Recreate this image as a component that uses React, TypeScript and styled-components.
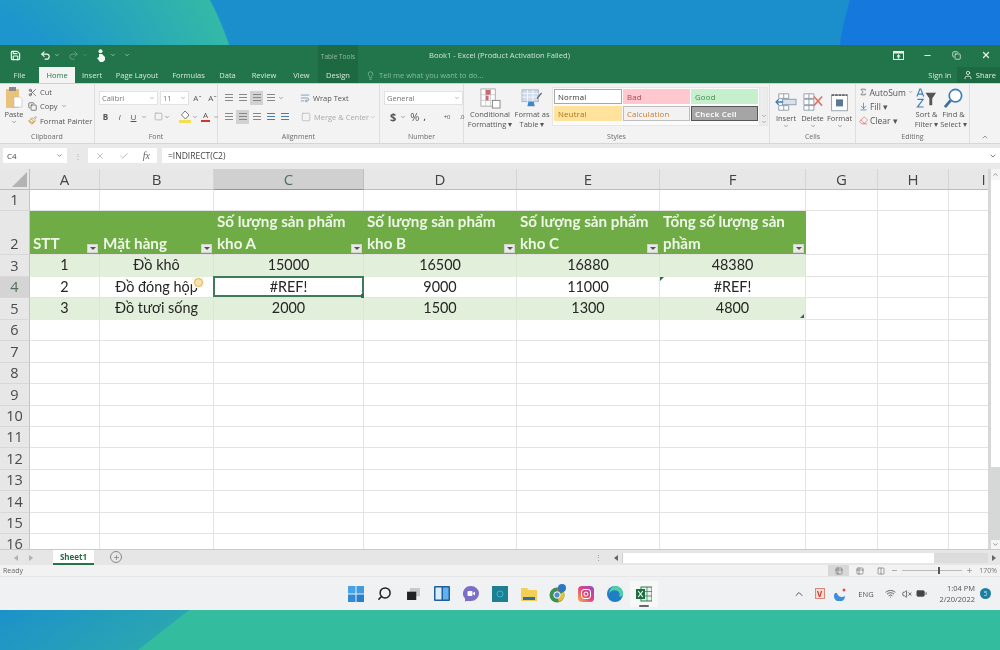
import * as React from "react";
import styled, { createGlobalStyle } from "styled-components";
import {
  Save,
  Undo2,
  Redo2,
  Lightbulb,
  User,
  Scissors,
  Copy,
  Paintbrush,
  ChevronDown,
  ChevronUp,
  X,
  Check,
  Minus,
  Plus,
  Search,
  Wifi,
  VolumeX,
  BatteryLow,
  Sigma,
  Eraser,
  ArrowDownToLine,
  Square,
  Table2,
  WrapText,
  Columns2,
} from "lucide-react";

const Global = createGlobalStyle`
  html, body { margin: 0; padding: 0; background: #1b8fca; }
  * { box-sizing: border-box; }
  body { width: 1000px; height: 650px; overflow: hidden; font-family: "Open Sans", sans-serif; }
`;

const Page = styled.div`
  width: 1000px;
  height: 650px;
  display: flex;
  flex-direction: column;
  filter: blur(0.35px);
`;

const TopWallpaper = styled.div`
  height: 45px;
  background:
    radial-gradient(circle 300px at 1136px 88px, #1478dc 99.5%, transparent 100%),
    radial-gradient(circle 300px at -55px 139px, #1c96cc 45%, #33b9a6 99.5%, transparent 100%),
    #1a8fcc;
`;

const BottomWallpaper = styled.div`
  height: 40px;
  background: linear-gradient(142deg, #1c92c9 0, #2aa5b2 116px, #34bc9f 117px, #34bc9f 100%);
`;

const Window = styled.div`
  height: 565px;
  display: flex;
  flex-direction: column;
  background: #f1f1f1;
  overflow: hidden;
`;

const TitleBar = styled.div`
  height: 22px;
  flex: none;
  background: #22744a;
  display: grid;
  grid-template-columns: 318px 40px 1fr auto;
  align-items: stretch;
  color: #e3f0e8;
`;

const QuickAccess = styled.div`
  display: flex;
  align-items: center;
  padding: 0 0 2px 10px;
  gap: 4px;
`;

const QuickIcon = styled.span<{ $w?: number; $dim?: boolean }>`
  width: ${(p) => p.$w ?? 24}px;
  display: flex;
  align-items: center;
  gap: 3px;
  opacity: ${(p) => (p.$dim ? 0.35 : 1)};
  color: #f2f8f4;
`;

const ContextTitle = styled.div`
  background: #1d6a42;
  font-size: 6.5px;
  display: flex;
  align-items: center;
  justify-content: center;
  color: #9ab8a6;
`;

const DocTitle = styled.div`
  font-size: 7.6px;
  display: flex;
  align-items: center;
  padding: 0 0 2px 71px;
  color: #cfe3d7;
`;

const WindowControls = styled.div`
  display: flex;
  align-items: center;
  padding-bottom: 2px;
`;

const WindowButton = styled.span`
  width: 29px;
  display: flex;
  justify-content: center;
  color: #e9f3ed;
`;

const TabRow = styled.div`
  height: 17px;
  flex: none;
  background: #22744a;
  display: flex;
  align-items: stretch;
  font-size: 7.5px;
  color: #d5e8dc;
  border-bottom: 1px solid #b9dcc6;
`;

const Tab = styled.div<{ $w: number; $active?: boolean; $context?: boolean }>`
  width: ${(p) => p.$w}px;
  display: flex;
  align-items: center;
  justify-content: center;
  background: ${(p) => (p.$active ? "#f3f3f3" : p.$context ? "#1d6a42" : "transparent")};
  color: ${(p) => (p.$active ? "#22744a" : "inherit")};
  white-space: nowrap;
`;

const TellMe = styled.div`
  margin-left: 8px;
  flex: 1;
  display: flex;
  align-items: center;
  gap: 4px;
  color: #87bd9f;
`;

const ShareBox = styled.div`
  display: flex;
  align-items: center;
  gap: 3px;
  padding: 0 4px 0 6px;
  background: #1d6a42;
  color: #e3f0e8;
  height: 100%;
`;

const Ribbon = styled.div`
  height: 60px;
  flex: none;
  display: flex;
  background: #f3f3f3;
  border-bottom: 1px solid #d6d6d6;
  color: #555;
  font-size: 7.5px;
`;

const Group = styled.div<{ $w: number }>`
  width: ${(p) => p.$w}px;
  flex: none;
  display: flex;
  flex-direction: column;
  border-right: 1px solid #dedede;
`;

const GroupBody = styled.div<{ $top?: number }>`
  flex: 1;
  display: flex;
  min-height: 0;
  padding-top: ${(p) => p.$top ?? 3}px;
`;

const GroupLabel = styled.div`
  height: 11px;
  font-size: 7px;
  line-height: 10px;
  text-align: center;
  color: #6b6b6b;
`;

const Stack = styled.div<{ $w?: number; $pad?: number; $size?: number }>`
  display: flex;
  flex-direction: column;
  width: ${(p) => (p.$w ? `${p.$w}px` : "auto")};
  padding-left: ${(p) => p.$pad ?? 0}px;
  font-size: ${(p) => p.$size ?? 7.5}px;
`;

const Line = styled.div<{ $gap?: number; $h?: number }>`
  display: flex;
  align-items: center;
  gap: ${(p) => p.$gap ?? 3}px;
  height: ${(p) => p.$h ?? 15}px;
  white-space: nowrap;
`;

const Spacer = styled.span<{ $w: number }>`
  width: ${(p) => p.$w}px;
  flex: none;
`;

const Muted = styled.span`
  color: #aaa;
`;

const NumberMark = styled.span<{ $size: number; $bold?: boolean }>`
  font-size: ${(p) => p.$size}px;
  font-weight: ${(p) => (p.$bold ? 700 : 400)};
`;

const BigButton = styled.div<{ $w: number; $mt?: number }>`
  width: ${(p) => p.$w}px;
  margin-top: ${(p) => p.$mt ?? 0}px;
  display: flex;
  flex-direction: column;
  align-items: center;
  text-align: center;
  line-height: 10px;
  font-size: 7.5px;
  white-space: nowrap;
`;

const BigIcon = styled.div`
  height: 22px;
  display: flex;
  align-items: center;
  justify-content: center;
`;

const Field = styled.div<{ $w: number }>`
  width: ${(p) => p.$w}px;
  height: 14px;
  background: #fff;
  border: 1px solid #e2e2e2;
  display: flex;
  align-items: center;
  justify-content: space-between;
  padding: 0 2px;
  color: #777;
  font-size: 7.5px;
`;

const Toggle = styled.span<{ $on?: boolean; $b?: boolean }>`
  width: 13px;
  height: 14px;
  display: flex;
  flex-direction: column;
  align-items: center;
  justify-content: center;
  gap: 1px;
  background: ${(p) => (p.$on ? "#d2d2d2" : "transparent")};
  font-weight: ${(p) => (p.$b ? 700 : 400)};
  font-size: 8px;
  line-height: 8px;
`;

const TextBars = styled.i<{ $color?: string }>`
  display: block;
  width: 8px;
  height: 7px;
  background: repeating-linear-gradient(
    180deg,
    ${(p) => p.$color ?? "#888"} 0 1px,
    transparent 1px 3px
  );
`;

const ColorBar = styled.i`
  display: block;
  width: 9px;
  height: 2px;
  background: #d8342c;
`;

const Gallery = styled.div`
  display: grid;
  grid-template-columns: 68px 67px 67px;
  grid-template-rows: 15px 15px;
  gap: 2px 1px;
  padding: 1px 1px 0;
  height: 39px;
  background: #fbfbfb;
  border: 1px solid #e6e6e6;
  border-right: 0;
  margin-left: 1px;
`;

const StyleCell = styled.div<{ $bg: string; $fg: string; $line?: string; $bold?: boolean }>`
  background: ${(p) => p.$bg};
  color: ${(p) => p.$fg};
  border: 1px solid ${(p) => p.$line ?? p.$bg};
  font-size: 7.8px;
  font-weight: ${(p) => (p.$bold ? 700 : 400)};
  display: flex;
  align-items: center;
  padding-left: 3px;
  letter-spacing: 0.2px;
`;

const GalleryScroll = styled.div`
  width: 9px;
  height: 39px;
  background: #ececec;
  border: 1px solid #e6e6e6;
  display: flex;
  flex-direction: column;
  align-items: center;
  justify-content: flex-end;
  color: #777;
`;

const Collapse = styled.div`
  flex: 1;
  display: flex;
  align-items: flex-end;
  justify-content: center;
  padding-bottom: 2px;
  color: #666;
`;

const FormulaGap = styled.div`
  height: 4px;
  flex: none;
  background: #e9e9e9;
`;

const FormulaBar = styled.div`
  height: 21px;
  flex: none;
  display: flex;
  gap: 3px;
  padding: 0 0 6px 3px;
  background: #e9e9e9;
  font-size: 8px;
  color: #444;
`;

const NameBox = styled.div`
  width: 64px;
  background: #fff;
  display: flex;
  align-items: center;
  justify-content: space-between;
  padding: 0 4px;
`;

const FormulaGrip = styled.div`
  width: 15px;
  display: flex;
  align-items: center;
  justify-content: center;
  color: #aaa;
`;

const FormulaButtons = styled.div`
  width: 69px;
  margin-right: 2px;
  background: #fff;
  display: flex;
  align-items: center;
  justify-content: space-around;
  color: #b5b5b5;
`;

const FxMark = styled.span`
  font-family: "Liberation Serif", serif;
  font-style: italic;
  color: #666;
  font-size: 10px;
`;

const FormulaInput = styled.div`
  flex: 1;
  background: #fff;
  display: flex;
  align-items: center;
  justify-content: space-between;
  padding: 0 3px 0 6px;
  font-size: 8.5px;
`;

const SheetArea = styled.div`
  height: 380px;
  flex: none;
  display: flex;
  background: #fff;
  overflow: hidden;
`;

const Grid = styled.div`
  width: 988px;
  flex: none;
  overflow: hidden;
  display: grid;
  grid-template-columns: 30px 70px 114px 150px 153px 143px 146px 72px 71px 70px;
  grid-template-rows: 21px 21px 44px 22px 21px 22px repeat(11, 21.4px);
  font-family: Lato, "Open Sans", sans-serif;
  font-size: 14.4px;
  color: #262626;
`;

const ColHead = styled.div<{ $sel?: boolean }>`
  background: ${(p) => (p.$sel ? "#d0d0d0" : "#e7e7e7")};
  border-right: 1px solid ${(p) => (p.$sel ? "#c0c0c0" : "#d4d4d4")};
  border-bottom: 1px solid ${(p) => (p.$sel ? "#8a9a8f" : "#bdbdbd")};
  display: flex;
  align-items: center;
  justify-content: center;
  color: ${(p) => (p.$sel ? "#4f6f5d" : "#444")};
  font-size: 15px;
  font-family: "Open Sans", sans-serif;
`;

const Corner = styled.div`
  background: #e7e7e7;
  border-right: 1px solid #bdbdbd;
  border-bottom: 1px solid #bdbdbd;
  display: flex;
  align-items: flex-end;
  justify-content: flex-end;
  padding: 0 2px 2px 0;
`;

const CornerMark = styled.i`
  width: 0;
  height: 0;
  border-left: 15px solid transparent;
  border-bottom: 15px solid #b3b3b3;
`;

const RowHead = styled.div<{ $sel?: boolean }>`
  background: ${(p) => (p.$sel ? "#d4d4d4" : "#e7e7e7")};
  border-right: 1px solid #c4c4c4;
  border-bottom: 1px solid #d8d8d8;
  display: flex;
  align-items: flex-end;
  justify-content: center;
  color: ${(p) => (p.$sel ? "#4f6f5d" : "#4a4a4a")};
  font-family: "Open Sans", sans-serif;
  font-size: 14.5px;
  line-height: 20px;
`;

const Cell = styled.div<{ $tone?: "head" | "band" | "plain" }>`
  position: relative;
  display: flex;
  align-items: center;
  justify-content: center;
  padding-bottom: 2px;
  white-space: nowrap;
  border-right: 1px solid ${(p) => (p.$tone === "head" ? "#70ad47" : p.$tone === "band" ? "#d9e8cf" : "#e3e3e3")};
  border-bottom: 1px solid ${(p) => (p.$tone === "band" ? "#e2efda" : "#e3e3e3")};
  background: ${(p) => (p.$tone === "head" ? "#6fac46" : p.$tone === "band" ? "#e2efda" : "#fff")};
`;

const HeadCell = styled(Cell)`
  align-items: flex-end;
  justify-content: flex-start;
  white-space: normal;
  color: #eef6e8;
  font-weight: 700;
  font-size: 15.2px;
  padding: 0 0 0 3px;
  line-height: 21.5px;
`;

const HeadText = styled.div`
  width: 142px;
`;

const FilterButton = styled.span`
  position: absolute;
  right: 1px;
  bottom: 1px;
  width: 11px;
  height: 9px;
  background: #e9e9e9;
  border: 1px solid #cfd8c8;
  display: flex;
  align-items: center;
  justify-content: center;
  &::after {
    content: "";
    border-left: 3px solid transparent;
    border-right: 3px solid transparent;
    border-top: 3px solid #555;
  }
`;

const Selection = styled.span`
  position: absolute;
  inset: -1px -1px 0 -1px;
  border: 2px solid #3f7a5a;
  &::after {
    content: "";
    position: absolute;
    right: -3px;
    bottom: -3px;
    width: 4px;
    height: 4px;
    background: #2b6f4b;
  }
`;

const SmartTag = styled.span`
  position: absolute;
  right: 9px;
  top: 0;
  width: 12px;
  height: 11px;
  background: #fbf6ec;
  display: flex;
  align-items: center;
  justify-content: center;
  &::after {
    content: "";
    width: 7px;
    height: 7px;
    border-radius: 50%;
    background: #f8e2ac;
    border: 1px solid #e0b257;
  }
`;

const ErrorMark = styled.span`
  position: absolute;
  left: 0;
  top: 0;
  border-top: 4px solid #2b6f4b;
  border-right: 4px solid transparent;
`;

const ResizeMark = styled.span`
  position: absolute;
  right: 1px;
  bottom: 1px;
  border-bottom: 4px solid #3c5a7c;
  border-left: 4px solid transparent;
`;

const VScroll = styled.div`
  width: 12px;
  background: #d6d8d8;
  padding-left: 3px;
  display: flex;
  flex-direction: column;
`;

const ScrollButton = styled.div<{ $end?: boolean }>`
  height: ${(p) => (p.$end ? 9 : 11)}px;
  margin-top: ${(p) => (p.$end ? "auto" : "0")};
  background: #f5f5f5;
  display: flex;
  align-items: center;
  justify-content: center;
  color: #555;
`;

const ScrollThumb = styled.div`
  height: 287px;
  background: #fff;
`;

const SheetTabs = styled.div`
  height: 16px;
  flex: none;
  display: flex;
  align-items: stretch;
  background: #e6e6e6;
  border-top: 1px solid #c9c9c9;
  font-size: 8px;
  color: #888;
`;

const TabNav = styled.div`
  width: 53px;
  display: flex;
  align-items: center;
  gap: 11px;
  padding-left: 14px;
`;

const SheetTab = styled.div`
  width: 41px;
  background: #fff;
  border-bottom: 2px solid #22744a;
  color: #2a6a48;
  font-weight: 700;
  display: flex;
  align-items: center;
  justify-content: center;
`;

const AddSheet = styled.div`
  margin-left: 16px;
  width: 12px;
  height: 12px;
  margin-top: 1px;
  border: 1px solid #888;
  border-radius: 50%;
  display: flex;
  align-items: center;
  justify-content: center;
  color: #666;
`;

const SplitDots = styled.div`
  margin-left: auto;
  display: flex;
  align-items: center;
  padding-right: 7px;
  letter-spacing: 1px;
  font-size: 7px;
`;

const HScroll = styled.div`
  width: 390px;
  display: flex;
  align-items: stretch;
`;

const HTrack = styled.div`
  flex: 1;
  margin: 3px 0 2px;
  background: linear-gradient(90deg, #fff 311px, #dcdcdc 311px);
  border-left: 1px solid #cfcfcf;
`;

const HButton = styled.div`
  width: 12px;
  display: flex;
  align-items: center;
  justify-content: center;
`;

const Arrow = styled.i<{ $left?: boolean; $tint?: string }>`
  border-top: 3px solid transparent;
  border-bottom: 3px solid transparent;
  ${(p) => (p.$left ? "border-right" : "border-left")}: 4px solid ${(p) => p.$tint ?? "#666"};
`;

const StatusBar = styled.div`
  height: 12px;
  flex: none;
  background: #f2f2f2;
  border-bottom: 1px solid #e6e6e6;
  display: flex;
  align-items: center;
  padding: 0 3px;
  font-size: 7px;
  color: #666;
`;

const ViewButtons = styled.div`
  margin-left: auto;
  display: flex;
  align-items: center;
  height: 100%;
  color: #777;
`;

const ViewButton = styled.span<{ $on?: boolean }>`
  width: 21px;
  height: 100%;
  display: flex;
  align-items: center;
  justify-content: center;
  background: ${(p) => (p.$on ? "#d8d8d8" : "transparent")};
`;

const ZoomSlider = styled.div`
  width: 60px;
  margin: 0 4px;
  height: 1px;
  background: #bbb;
  position: relative;
`;

const ZoomThumb = styled.span`
  position: absolute;
  left: 36px;
  top: -3px;
  width: 2px;
  height: 7px;
  background: #555;
`;

const ZoomValue = styled.span`
  width: 24px;
  text-align: right;
`;

const Taskbar = styled.div`
  height: 33px;
  flex: none;
  background: #f0f1f3;
  display: grid;
  grid-template-columns: 1fr auto 1fr;
  align-items: center;
`;

const TaskIcons = styled.div`
  grid-column: 2;
  display: flex;
  align-items: center;
`;

const TaskIcon = styled.div<{ $active?: boolean }>`
  position: relative;
  width: 28.8px;
  height: 26px;
  display: flex;
  align-items: center;
  justify-content: center;
  background: ${(p) => (p.$active ? "#f8f8f8" : "transparent")};
  &::after {
    content: "";
    display: ${(p) => (p.$active ? "block" : "none")};
    position: absolute;
    bottom: 0;
    width: 10px;
    height: 2px;
    border-radius: 1px;
    background: #666;
  }
`;

const MirroredSearch = styled(Search)`
  transform: scaleX(-1);
`;

const Tray = styled.div`
  grid-column: 3;
  display: flex;
  align-items: center;
  justify-content: flex-end;
  color: #555;
  font-size: 7.5px;
  padding-right: 9px;
`;

const TraySlot = styled.span<{ $w: number }>`
  width: ${(p) => p.$w}px;
  display: flex;
  align-items: center;
  justify-content: center;
`;

const Clock = styled.div`
  width: 46px;
  text-align: right;
  line-height: 11px;
  margin-right: 5px;
`;

const UserBadge = styled.span`
  width: 11px;
  height: 11px;
  border-radius: 50%;
  background: #1a7fa0;
  color: #cfeaf2;
  font-size: 6.5px;
  display: flex;
  align-items: center;
  justify-content: center;
`;

const VShield = styled.span`
  width: 10px;
  height: 11px;
  background: #f7dcd6;
  border: 1px solid #d98a7c;
  color: #c0392b;
  font-size: 8px;
  font-weight: 700;
  display: flex;
  align-items: center;
  justify-content: center;
`;

const PasteIcon = () => (
  <svg width="18" height="22" viewBox="0 0 18 22">
    <rect x="1" y="2" width="13" height="19" rx="1" fill="#e9c27d" />
    <rect x="4" y="0" width="7" height="4" fill="#8a8a8a" />
    <path d="M9 10h6l2 2v8H9z" fill="#fff" stroke="#bbb" strokeWidth=".6" />
  </svg>
);

const TouchIcon = () => (
  <svg width="11" height="13" viewBox="0 0 11 13">
    <circle cx="4.5" cy="2.2" r="2" fill="#f2f8f4" />
    <path d="M3 5h3l3 3v3l-2 2H4L1 9l2-1z" fill="#f2f8f4" />
  </svg>
);

const RibbonDisplayIcon = () => (
  <svg width="11" height="9" viewBox="0 0 11 9">
    <rect x=".5" y=".5" width="10" height="8" fill="none" stroke="#e9f3ed" />
    <rect x=".5" y=".5" width="10" height="2" fill="#e9f3ed" />
    <path d="M5.5 3l2 2.5h-4z" fill="#e9f3ed" />
    <rect x="4.7" y="5" width="1.6" height="2.5" fill="#e9f3ed" />
  </svg>
);

const FillIcon = () => (
  <svg width="12" height="13" viewBox="0 0 12 13">
    <path d="M6 1l4 4-3.5 4L2.5 5z" fill="#fff" stroke="#777" />
    <rect x="0" y="10" width="12" height="3" fill="#f4e04d" />
  </svg>
);

const CondFormatIcon = () => (
  <svg width="21" height="21" viewBox="0 0 22 22">
    <rect x="1" y="1" width="15" height="18" fill="#fff" stroke="#aaa" />
    <path d="M1 7h15M1 13h15M6 1v18M11 1v18" stroke="#bbb" strokeWidth=".7" />
    <rect x="6" y="2" width="5" height="5" fill="#c76b74" />
    <rect x="6" y="8" width="3" height="5" fill="#c76b74" />
    <rect x="13" y="13" width="8" height="8" fill="#fff" stroke="#888" />
  </svg>
);

const FormatTableIcon = () => (
  <svg width="22" height="20" viewBox="0 0 24 22">
    <rect x="1" y="2" width="18" height="13" fill="#cfdcec" stroke="#a9b4c0" />
    <path d="M1 6h18M1 10h18M7 2v13M13 2v13" stroke="#fff" strokeWidth=".8" />
    <path d="M17 11l5-6 1 1-5 6z" fill="#666" />
    <path d="M8 15h6l1 5H7z" fill="#3f87c6" />
  </svg>
);

const InsertCellsIcon = () => (
  <svg width="22" height="20" viewBox="0 0 24 22">
    <path d="M4 2h11v5H4zM4 15h11v5H4zM9.5 2v5M9.5 15v5" fill="#fff" stroke="#8a9aa8" />
    <rect x="8" y="8" width="15" height="6" fill="#d8e2ec" stroke="#8a9aa8" />
    <path d="M1 11h8M4 8l-3 3 3 3" fill="none" stroke="#3f7fb8" strokeWidth="1.4" />
  </svg>
);

const DeleteCellsIcon = () => (
  <svg width="22" height="20" viewBox="0 0 24 22">
    <path d="M2 2h11v5H2zM2 15h11v5H2zM2 8h11v6H2zM7.5 2v18" fill="#fff" stroke="#8a9aa8" />
    <path d="M13 5l9 10M22 5l-9 10" stroke="#d9756b" strokeWidth="1.8" />
  </svg>
);

const FormatCellsIcon = () => (
  <svg width="21" height="20" viewBox="0 0 24 22">
    <rect x="3" y="3" width="18" height="18" fill="#fff" stroke="#8a9aa8" />
    <path d="M3 3h18" stroke="#666" strokeWidth="2" strokeDasharray="3 1" />
    <rect x="8" y="8" width="8" height="8" fill="#5c7894" />
  </svg>
);

const SortIcon = () => (
  <svg width="21" height="20" viewBox="0 0 22 21">
    <path d="M1 9l3-8h1l3 8M2.5 6.5h4M1.5 12h6l-6 8h6.5" fill="none" stroke="#3f7fb8" strokeWidth="1.2" />
    <path d="M10 5h11l-4 6v7h-3v-7z" fill="#555" />
  </svg>
);

const FindIcon = () => (
  <svg width="21" height="21" viewBox="0 0 22 22">
    <circle cx="13" cy="8" r="6.5" fill="#fff" stroke="#3f7fb8" strokeWidth="1.8" />
    <path d="M8 13l-6 7" stroke="#3f6f9c" strokeWidth="3" />
  </svg>
);

const WinLogo = () => (
  <svg width="16" height="16" viewBox="0 0 16 16">
    <rect width="7.5" height="7.5" fill="#45a4e8" />
    <rect x="8.5" width="7.5" height="7.5" fill="#3f9be3" />
    <rect y="8.5" width="7.5" height="7.5" fill="#2f8bd8" />
    <rect x="8.5" y="8.5" width="7.5" height="7.5" fill="#2680cf" />
  </svg>
);

const TaskView = () => (
  <svg width="13" height="12" viewBox="0 0 14 13">
    <rect x="3" y="0" width="11" height="9" fill="#c9c9c9" />
    <rect x="0" y="4" width="10" height="9" fill="#222" />
  </svg>
);

const Widgets = () => (
  <svg width="16" height="15" viewBox="0 0 16 15">
    <rect width="16" height="15" rx="1" fill="#1f5f9e" />
    <rect x="1.5" y="1.5" width="6" height="12" fill="#d8ecfa" />
    <rect x="9" y="1.5" width="5.5" height="12" fill="#5fb2ee" />
  </svg>
);

const Chat = () => (
  <svg width="16" height="16" viewBox="0 0 16 16">
    <path d="M8 0a8 7.5 0 0 1 0 15H3l-1 1v-3.5A8 7.5 0 0 1 8 0z" fill="#7a6fc9" />
    <rect x="4.5" y="5" width="5" height="5" rx="1" fill="#fff" />
    <path d="M10 7l2-1.5v4L10 8z" fill="#fff" />
  </svg>
);

const Store = () => (
  <svg width="16" height="16" viewBox="0 0 16 16">
    <rect width="16" height="16" fill="#1c7f92" />
    <circle cx="8" cy="8" r="3" fill="none" stroke="#35b7d0" />
  </svg>
);

const Folder = () => (
  <svg width="16" height="14" viewBox="0 0 16 14">
    <path d="M0 1h6l2 2h8v11H0z" fill="#f4cf55" />
    <rect x="2" y="10" width="12" height="3" fill="#2d6fa8" />
  </svg>
);

const ChromeBadge = () => (
  <svg width="18" height="20" viewBox="0 0 18 20">
    <circle cx="8" cy="11" r="7.5" fill="#3f8f4f" />
    <path d="M8 3.5A7.5 7.5 0 0 1 15 8H8z" fill="#d65a4a" />
    <path d="M15 8a7.5 7.5 0 0 1-5 10l-2-7z" fill="#e8bd3c" />
    <circle cx="8" cy="11" r="3.2" fill="#4b8fdc" stroke="#fff" />
    <circle cx="13" cy="4" r="4" fill="#2b77c0" />
  </svg>
);

const Instagram = () => (
  <svg width="16" height="16" viewBox="0 0 16 16">
    <defs>
      <linearGradient id="ig" x1="0" y1="1" x2="1" y2="0">
        <stop offset="0" stopColor="#f6b350" />
        <stop offset=".5" stopColor="#e0457b" />
        <stop offset="1" stopColor="#8a4fd0" />
      </linearGradient>
    </defs>
    <rect width="16" height="16" rx="4" fill="url(#ig)" />
    <rect x="3.5" y="3.5" width="9" height="9" rx="2.5" fill="none" stroke="#fff" />
    <circle cx="8" cy="8" r="2" fill="none" stroke="#fff" />
  </svg>
);

const Edge = () => (
  <svg width="16" height="16" viewBox="0 0 16 16">
    <circle cx="8" cy="8" r="8" fill="#1f7fc4" />
    <path d="M8 0a8 8 0 0 1 8 8c0 2-2 3-4 2.5 2-3-1-7-6-6C4 5 3 6 2 7.5 2.5 3.5 5 0 8 0z" fill="#4fd1a5" />
  </svg>
);

const ExcelIcon = () => (
  <svg width="16" height="16" viewBox="0 0 16 16">
    <rect x="5" y="1" width="11" height="14" fill="#e7f0ea" stroke="#2b7a4c" />
    <path d="M11 1v14M5 5.5h11M5 10h11" stroke="#2b7a4c" strokeWidth=".7" />
    <rect x="0" y="3" width="9" height="10" fill="#1d6f42" />
    <path d="M2.2 5l4.6 6M6.8 5l-4.6 6" stroke="#fff" strokeWidth="1.1" />
  </svg>
);

const MoonApp = () => (
  <svg width="14" height="14" viewBox="0 0 14 14">
    <path d="M2 6a5.5 5.5 0 1 0 10 3C9 11 5 10 4 6z" fill="#3f8fd8" />
    <circle cx="11" cy="3" r="1.5" fill="#d9534f" />
  </svg>
);

const tabs: [string, number][] = [
  ["File", 39],
  ["Home", 36],
  ["Insert", 34],
  ["Page Layout", 56],
  ["Formulas", 47],
  ["Data", 31],
  ["Review", 42],
  ["View", 33],
];

const columns = ["A", "B", "C", "D", "E", "F", "G", "H", "I"];

const headers = [
  "STT",
  "Mặt hàng",
  "Số lượng sản phẩm kho A",
  "Số lượng sản phẩm kho B",
  "Số lượng sản phẩm kho C",
  "Tổng số lượng sản phầm",
];

const rows = [
  ["1", "Đồ khô", "15000", "16500", "16880", "48380"],
  ["2", "Đồ đóng hộp", "#REF!", "9000", "11000", "#REF!"],
  ["3", "Đồ tươi sống", "2000", "1500", "1300", "4800"],
];

const blankRow = (n: number, count: number) => (
  <React.Fragment key={n}>
    <RowHead>{n}</RowHead>
    {Array.from({ length: count }).map((_, i) => (
      <Cell key={i} $tone="plain" />
    ))}
  </React.Fragment>
);

const Sheet = () => (
  <SheetArea>
    <Grid>
      <Corner>
        <CornerMark />
      </Corner>
      {columns.map((c) => (
        <ColHead key={c} $sel={c === "C"}>
          {c}
        </ColHead>
      ))}
      {blankRow(1, 9)}
      <RowHead>2</RowHead>
      {headers.map((h) => (
        <HeadCell key={h} $tone="head">
          <HeadText>{h}</HeadText>
          <FilterButton />
        </HeadCell>
      ))}
      {[0, 1, 2].map((i) => (
        <Cell key={`h${i}`} $tone="plain" />
      ))}
      {rows.map((row, r) => (
        <React.Fragment key={r}>
          <RowHead $sel={r === 1}>{r + 3}</RowHead>
          {row.map((v, c) => (
            <Cell key={c} $tone={r === 1 ? "plain" : "band"}>
              {v}
              {r === 1 && c === 1 && <SmartTag />}
              {r === 1 && c === 2 && <Selection />}
              {r === 1 && c === 5 && <ErrorMark />}
              {r === 2 && c === 5 && <ResizeMark />}
            </Cell>
          ))}
          {[0, 1, 2].map((i) => (
            <Cell key={`b${i}`} $tone="plain" />
          ))}
        </React.Fragment>
      ))}
      {[6, 7, 8, 9, 10, 11, 12, 13, 14, 15, 16].map((n) => blankRow(n, 9))}
    </Grid>
    <VScroll>
      <ScrollButton>
        <ChevronUp size={7} />
      </ScrollButton>
      <ScrollThumb />
      <ScrollButton $end>
        <ChevronDown size={7} />
      </ScrollButton>
    </VScroll>
  </SheetArea>
);

const RibbonPanel = () => (
  <Ribbon>
    <Group $w={95}>
      <GroupBody $top={1}>
        <BigButton $w={28} $mt={2}>
          <BigIcon>
            <PasteIcon />
          </BigIcon>
          Paste
          <ChevronDown size={6} />
        </BigButton>
        <Stack>
          <Line $h={14}>
            <Scissors size={9} /> Cut
          </Line>
          <Line $h={14}>
            <Copy size={9} /> Copy <ChevronDown size={6} />
          </Line>
          <Line $h={15}>
            <Paintbrush size={9} color="#c58a2c" /> Format Painter
          </Line>
        </Stack>
      </GroupBody>
      <GroupLabel>Clipboard</GroupLabel>
    </Group>
    <Group $w={123}>
      <GroupBody $top={5}>
        <Stack $pad={4}>
          <Line $gap={2} $h={17}>
            <Field $w={59}>
              Calibri <ChevronDown size={6} />
            </Field>
            <Field $w={29}>
              11 <ChevronDown size={6} />
            </Field>
            <Toggle>Aˆ</Toggle>
            <Toggle>Aˇ</Toggle>
          </Line>
          <Line $gap={1} $h={21}>
            <Toggle $b>B</Toggle>
            <Toggle>
              <em>I</em>
            </Toggle>
            <Toggle>
              <u>U</u>
            </Toggle>
            <ChevronDown size={6} />
            <Spacer $w={5} />
            <Square size={9} color="#aaa" />
            <ChevronDown size={6} />
            <Spacer $w={7} />
            <FillIcon />
            <ChevronDown size={6} />
            <Toggle>
              A
              <ColorBar />
            </Toggle>
            <ChevronDown size={6} />
          </Line>
        </Stack>
      </GroupBody>
      <GroupLabel>Font</GroupLabel>
    </Group>
    <Group $w={162}>
      <GroupBody $top={5}>
        <Stack $pad={4}>
          <Line $gap={1} $h={17}>
            <Toggle>
              <TextBars />
            </Toggle>
            <Toggle>
              <TextBars />
            </Toggle>
            <Toggle $on>
              <TextBars />
            </Toggle>
            <Toggle>
              <TextBars />
            </Toggle>
            <ChevronDown size={6} />
            <Spacer $w={14} />
            <WrapText size={10} color="#6f93b5" />
            <Spacer $w={1} />
            Wrap Text
          </Line>
          <Line $gap={1} $h={21}>
            <Toggle>
              <TextBars />
            </Toggle>
            <Toggle $on>
              <TextBars />
            </Toggle>
            <Toggle>
              <TextBars />
            </Toggle>
            <Toggle>
              <TextBars $color="#4a7fb0" />
            </Toggle>
            <Toggle>
              <TextBars $color="#4a7fb0" />
            </Toggle>
            <Spacer $w={8} />
            <Square size={10} color="#bbb" />
            <Spacer $w={1} />
            <Muted>Merge &amp; Center</Muted>
            <ChevronDown size={6} color="#aaa" />
          </Line>
        </Stack>
      </GroupBody>
      <GroupLabel>Alignment</GroupLabel>
    </Group>
    <Group $w={84}>
      <GroupBody $top={5}>
        <Stack $pad={4}>
          <Line $h={17}>
            <Field $w={79}>
              General <ChevronDown size={6} />
            </Field>
          </Line>
          <Line $gap={4} $h={21}>
            <Spacer $w={2} />
            <NumberMark $size={11} $bold>$</NumberMark>
            <ChevronDown size={6} />
            <NumberMark $size={11}>%</NumberMark>
            <NumberMark $size={8} $bold>,</NumberMark>
            <Spacer $w={10} />
            <NumberMark $size={6}>+0</NumberMark>
            <Spacer $w={1} />
            <NumberMark $size={6}>.0</NumberMark>
          </Line>
        </Stack>
      </GroupBody>
      <GroupLabel>Number</GroupLabel>
    </Group>
    <Group $w={306}>
      <GroupBody>
        <Spacer $w={3} />
        <BigButton $w={46}>
          <BigIcon>
            <CondFormatIcon />
          </BigIcon>
          Conditional
          <br />
          Formatting ▾
        </BigButton>
        <BigButton $w={38}>
          <BigIcon>
            <FormatTableIcon />
          </BigIcon>
          Format as
          <br />
          Table ▾
        </BigButton>
        <Gallery>
          <StyleCell $bg="#fff" $fg="#333" $line="#a8a8a8">
            Normal
          </StyleCell>
          <StyleCell $bg="#ffc7ce" $fg="#b3404e">
            Bad
          </StyleCell>
          <StyleCell $bg="#c6efce" $fg="#3d8a45">
            Good
          </StyleCell>
          <StyleCell $bg="#ffe29c" $fg="#a8741a">
            Neutral
          </StyleCell>
          <StyleCell $bg="#f2f2f2" $fg="#c9792a" $line="#bdbdbd">
            Calculation
          </StyleCell>
          <StyleCell $bg="#a5a5a5" $fg="#f5f5f5" $line="#555" $bold>
            Check Cell
          </StyleCell>
        </Gallery>
        <GalleryScroll>
          <ChevronDown size={6} />
          <ChevronDown size={6} />
        </GalleryScroll>
      </GroupBody>
      <GroupLabel>Styles</GroupLabel>
    </Group>
    <Group $w={86}>
      <GroupBody>
        <Stack $pad={3}>
          <Line $gap={0} $h={45}>
            <BigButton $w={26}>
              <BigIcon>
                <InsertCellsIcon />
              </BigIcon>
              Insert
              <ChevronDown size={6} />
            </BigButton>
            <BigButton $w={27}>
              <BigIcon>
                <DeleteCellsIcon />
              </BigIcon>
              Delete
              <ChevronDown size={6} />
            </BigButton>
            <BigButton $w={27}>
              <BigIcon>
                <FormatCellsIcon />
              </BigIcon>
              Format
              <ChevronDown size={6} />
            </BigButton>
          </Line>
        </Stack>
      </GroupBody>
      <GroupLabel>Cells</GroupLabel>
    </Group>
    <Group $w={114}>
      <GroupBody $top={1}>
        <Stack $pad={3} $w={57} $size={8.5}>
          <Line $h={14} $gap={2}>
            <Sigma size={10} /> AutoSum <ChevronDown size={6} />
          </Line>
          <Line $h={14} $gap={2}>
            <ArrowDownToLine size={9} color="#3f7fb8" /> Fill ▾
          </Line>
          <Line $h={14} $gap={2}>
            <Eraser size={9} color="#d9756b" /> Clear ▾
          </Line>
        </Stack>
        <BigButton $w={27} $mt={2}>
          <BigIcon>
            <SortIcon />
          </BigIcon>
          Sort &amp;
          <br />
          Filter ▾
        </BigButton>
        <BigButton $w={27} $mt={2}>
          <BigIcon>
            <FindIcon />
          </BigIcon>
          Find &amp;
          <br />
          Select ▾
        </BigButton>
      </GroupBody>
      <GroupLabel>Editing</GroupLabel>
    </Group>
    <Collapse>
      <ChevronUp size={8} />
    </Collapse>
  </Ribbon>
);

export default function App() {
  return (
    <Page>
      <Global />
      <TopWallpaper />
      <Window>
        <TitleBar>
          <QuickAccess>
            <QuickIcon $w={26}>
              <Save size={11} strokeWidth={2.5} />
            </QuickIcon>
            <QuickIcon>
              <Undo2 size={11} strokeWidth={2.5} />
              <ChevronDown size={6} />
            </QuickIcon>
            <QuickIcon $dim>
              <Redo2 size={11} />
              <ChevronDown size={6} />
            </QuickIcon>
            <QuickIcon>
              <TouchIcon />
              <ChevronDown size={6} />
            </QuickIcon>
            <QuickIcon>
              <ChevronDown size={6} />
            </QuickIcon>
          </QuickAccess>
          <ContextTitle>Table Tools</ContextTitle>
          <DocTitle>Book1 - Excel (Product Activation Failed)</DocTitle>
          <WindowControls>
            <WindowButton>
              <RibbonDisplayIcon />
            </WindowButton>
            <WindowButton>
              <Minus size={9} strokeWidth={3} />
            </WindowButton>
            <WindowButton>
              <Copy size={9} />
            </WindowButton>
            <WindowButton>
              <X size={10} strokeWidth={3} />
            </WindowButton>
          </WindowControls>
        </TitleBar>
        <TabRow>
          {tabs.map(([name, w]) => (
            <Tab key={name} $w={w} $active={name === "Home"}>
              {name}
            </Tab>
          ))}
          <Tab $w={40} $context>
            Design
          </Tab>
          <TellMe>
            <Lightbulb size={9} /> Tell me what you want to do...
          </TellMe>
          <Tab $w={34}>Sign in</Tab>
          <ShareBox>
            <User size={10} /> Share
          </ShareBox>
        </TabRow>
        <RibbonPanel />
        <FormulaGap />
        <FormulaBar>
          <NameBox>
            C4 <ChevronDown size={7} />
          </NameBox>
          <FormulaGrip>⋮</FormulaGrip>
          <FormulaButtons>
            <X size={10} />
            <Check size={10} />
            <FxMark>fx</FxMark>
          </FormulaButtons>
          <FormulaInput>
            =INDIRECT(C2)
            <ChevronDown size={8} />
          </FormulaInput>
        </FormulaBar>
        <Sheet />
        <SheetTabs>
          <TabNav>
            <Arrow $left $tint="#b0b0b0" />
            <Arrow $tint="#b0b0b0" />
          </TabNav>
          <SheetTab>Sheet1</SheetTab>
          <AddSheet>
            <Plus size={7} />
          </AddSheet>
          <SplitDots>⋮</SplitDots>
          <HScroll>
            <HButton>
              <Arrow $left />
            </HButton>
            <HTrack />
            <HButton>
              <Arrow />
            </HButton>
          </HScroll>
        </SheetTabs>
        <StatusBar>
          Ready
          <ViewButtons>
            <ViewButton $on>
              <Table2 size={8} />
            </ViewButton>
            <ViewButton>
              <Table2 size={8} />
            </ViewButton>
            <ViewButton>
              <Columns2 size={8} />
            </ViewButton>
            <Minus size={7} />
            <ZoomSlider>
              <ZoomThumb />
            </ZoomSlider>
            <Plus size={7} />
            <ZoomValue>170%</ZoomValue>
          </ViewButtons>
        </StatusBar>
        <Taskbar>
          <TaskIcons>
            <TaskIcon>
              <WinLogo />
            </TaskIcon>
            <TaskIcon>
              <MirroredSearch size={15} color="#222" strokeWidth={2.4} />
            </TaskIcon>
            <TaskIcon>
              <TaskView />
            </TaskIcon>
            <TaskIcon>
              <Widgets />
            </TaskIcon>
            <TaskIcon>
              <Chat />
            </TaskIcon>
            <TaskIcon>
              <Store />
            </TaskIcon>
            <TaskIcon>
              <Folder />
            </TaskIcon>
            <TaskIcon>
              <ChromeBadge />
            </TaskIcon>
            <TaskIcon>
              <Instagram />
            </TaskIcon>
            <TaskIcon>
              <Edge />
            </TaskIcon>
            <TaskIcon $active>
              <ExcelIcon />
            </TaskIcon>
          </TaskIcons>
          <Tray>
            <TraySlot $w={20}>
              <ChevronUp size={12} />
            </TraySlot>
            <TraySlot $w={21}>
              <VShield>V</VShield>
            </TraySlot>
            <TraySlot $w={20}>
              <MoonApp />
            </TraySlot>
            <TraySlot $w={32}>ENG</TraySlot>
            <TraySlot $w={17}>
              <Wifi size={11} />
            </TraySlot>
            <TraySlot $w={15}>
              <VolumeX size={10} />
            </TraySlot>
            <TraySlot $w={15}>
              <BatteryLow size={11} fill="#444" />
            </TraySlot>
            <Clock>
              1:04 PM
              <br />
              2/20/2022
            </Clock>
            <UserBadge>5</UserBadge>
          </Tray>
        </Taskbar>
      </Window>
      <BottomWallpaper />
    </Page>
  );
}
